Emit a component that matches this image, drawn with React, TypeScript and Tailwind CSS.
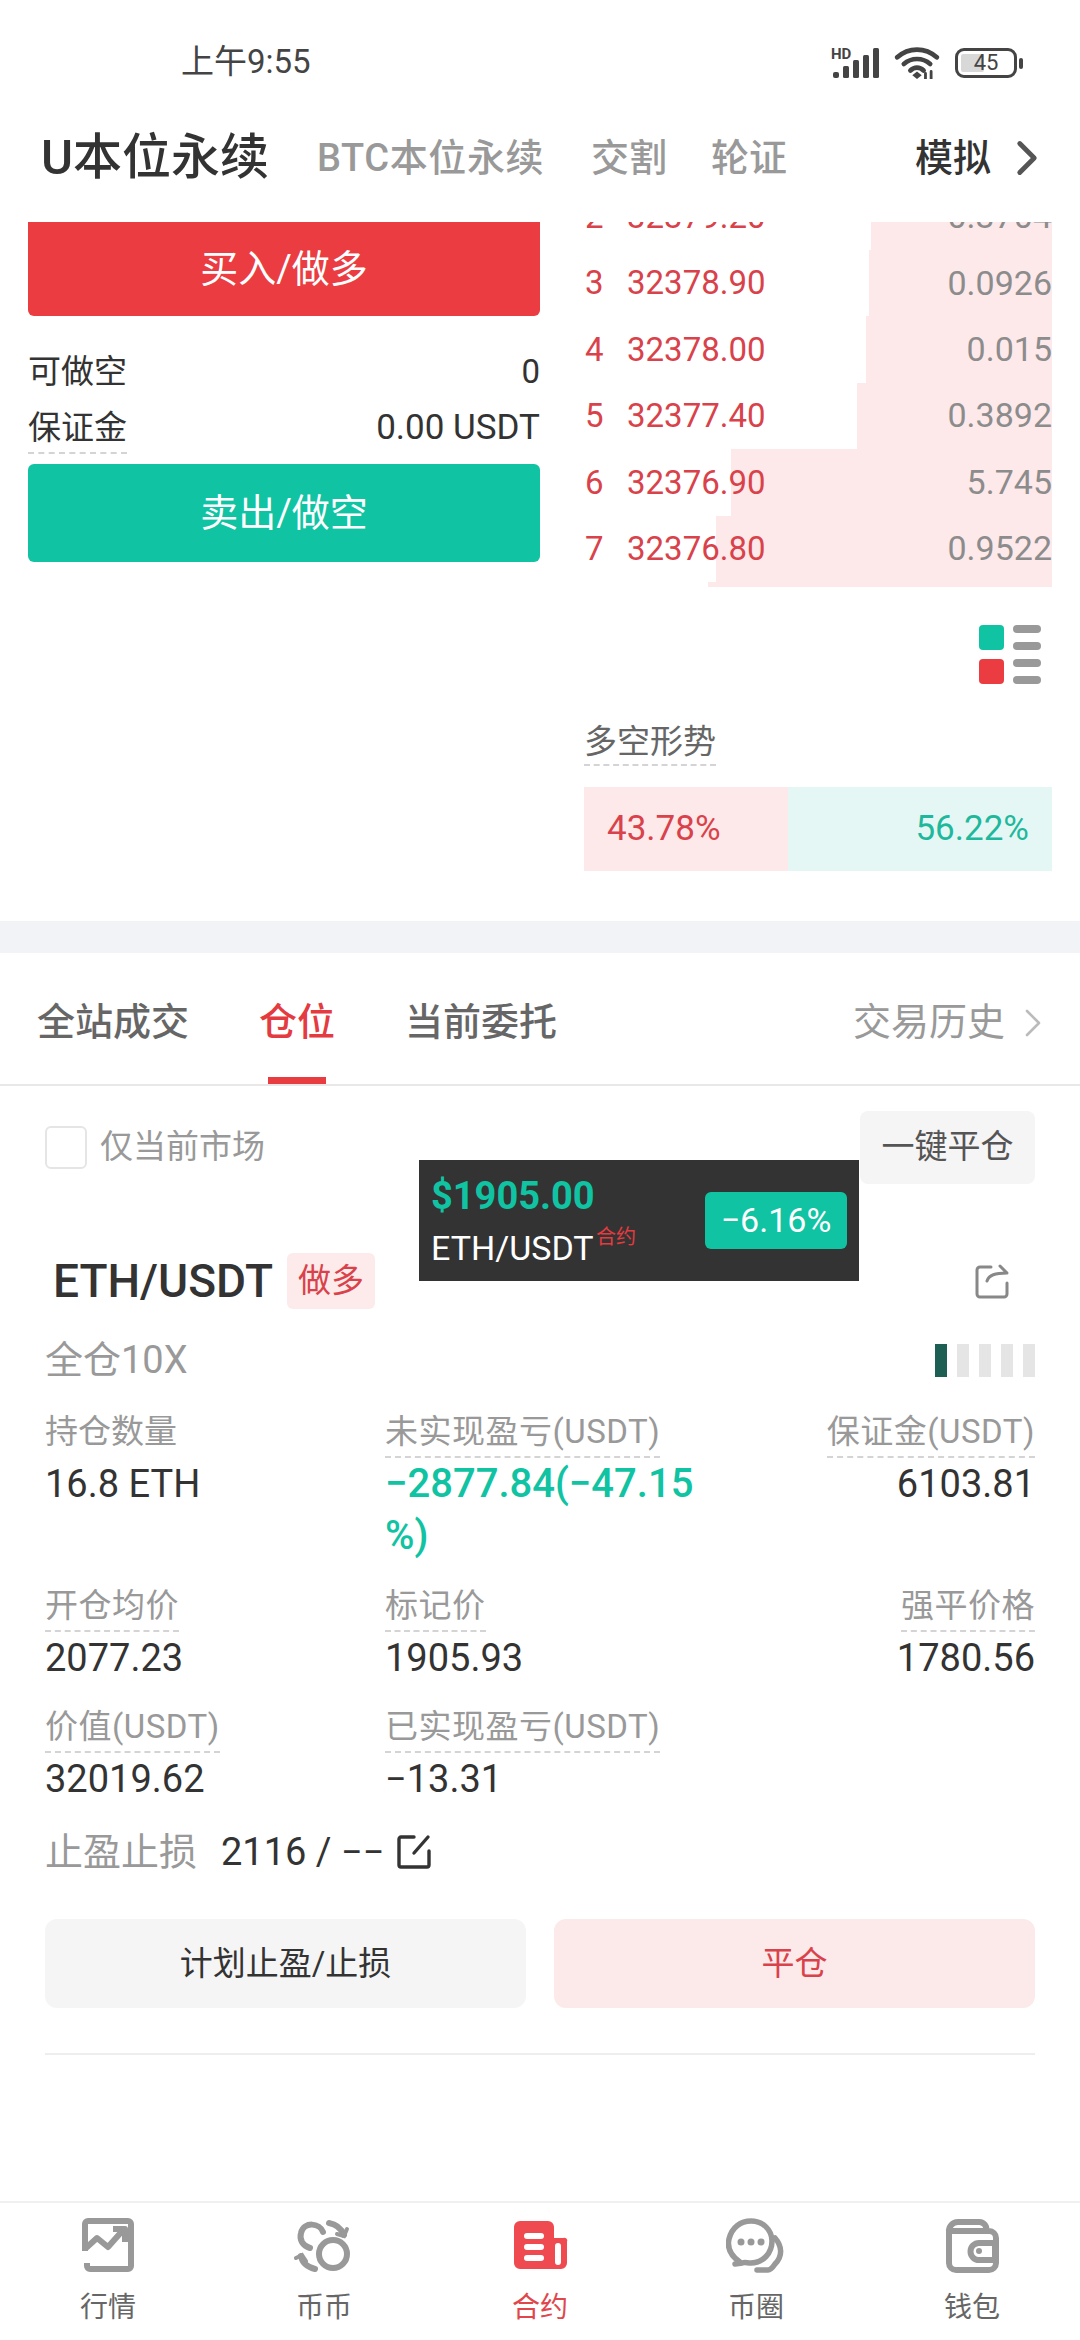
import { ChevronRight } from "lucide-react";

const bookRows = [
  { n: "2", price: "32379.20", qty: "0.3704", bar: 181 },
  { n: "3", price: "32378.90", qty: "0.0926", bar: 183 },
  { n: "4", price: "32378.00", qty: "0.015", bar: 186 },
  { n: "5", price: "32377.40", qty: "0.3892", bar: 195 },
  { n: "6", price: "32376.90", qty: "5.745", bar: 321 },
  { n: "7", price: "32376.80", qty: "0.9522", bar: 336 },
];

function StatusIcons() {
  return (
    <div className="flex items-center gap-[15px] mt-[7px]">
      <div className="relative w-[48px] h-[30px]">
        <span className="absolute left-0 -top-[2px] text-[15px] leading-[16px] font-bold text-[#444]">HD</span>
        <svg width="48" height="30" viewBox="0 0 48 30" fill="#444">
          <rect x="2" y="24" width="6" height="6" rx="2" />
          <rect x="12" y="18" width="6" height="12" rx="1.5" />
          <rect x="22" y="12" width="6" height="18" rx="1.5" />
          <rect x="32" y="7" width="6" height="23" rx="1.5" />
          <rect x="42" y="0" width="6" height="30" rx="1.5" />
        </svg>
      </div>
      <svg width="46" height="32" viewBox="0 0 48 34" fill="none" stroke="#444" strokeWidth="5" strokeLinecap="round">
        <path d="M3 11C15 0 33 0 45 11" />
        <path d="M10 18C18 11 30 11 38 18" />
        <path d="M17 25C21 21 27 21 31 25" />
        <path d="M24 26l5 4-5 4-5-4z" fill="#444" stroke="none" />
        <path d="M33 28v6M39 26v8" strokeWidth="3" />
      </svg>
      <div className="flex items-center gap-[2px]">
        <div className="relative w-[62px] h-[30px] rounded-[9px] border-[3px] border-[#444] p-[3px]">
          <div className="w-[45%] h-full bg-[#d8d8d8] rounded-[2px]" />
          <span className="absolute inset-0 flex items-center justify-center text-[22px] leading-none text-[#444]">45</span>
        </div>
        <div className="w-[4px] h-[11px] bg-[#444] rounded-full" />
      </div>
    </div>
  );
}

function Label({ children }: { children: React.ReactNode }) {
  return (
    <span className="inline-block text-[33px] tracking-[0.5px] leading-[40px] pb-[4px] text-[#999] border-b-2 border-dashed border-[#d4d4d4]">
      {children}
    </span>
  );
}

function Stat({ label, value, right, plain }: { label: string; value: string; right?: boolean; plain?: boolean }) {
  return (
    <div className={right ? "text-right" : ""}>
      {plain ? <span className="inline-block text-[33px] leading-[40px] pb-[6px] text-[#999]">{label}</span> : <Label>{label}</Label>}
      <div className="text-[38px] leading-[52px] text-[#333]">{value}</div>
    </div>
  );
}

function NavIcon({ name }: { name: string }) {
  if (name === "行情") {
    return (
      <svg width="60" height="60" viewBox="0 0 60 60" fill="none" stroke="#999" strokeWidth="6" strokeLinejoin="round">
        <path d="M7 36V9a3 3 0 0 1 3-3h40a3 3 0 0 1 3 3v42a3 3 0 0 1-3 3H12a3 3 0 0 1-3-3v-3" />
        <path d="M8 33l11-10 11 9 16-18" />
        <path d="M35 14h12v13" />
      </svg>
    );
  }
  if (name === "币币") {
    return (
      <svg width="60" height="60" viewBox="0 0 60 60" fill="none" stroke="#999" strokeWidth="6" strokeLinecap="round">
        <circle cx="39" cy="39" r="14" />
        <path d="M29 17C26 8 10 6 7 18c-2 7 2 13 9 15" />
        <path d="M35 8c6 1 12 5 15 12" />
        <path d="M53 14l-3 7-7-2" strokeWidth="4" />
        <path d="M7 41c1 6 6 11 14 13" />
        <path d="M2 43l6-3 4 6" strokeWidth="4" />
      </svg>
    );
  }
  if (name === "合约") {
    return (
      <svg width="60" height="60" viewBox="0 0 60 60">
        <path d="M10 6h28a6 6 0 0 1 6 6v11h9a3 3 0 0 1 4 4v21a6 6 0 0 1-6 6H10a6 6 0 0 1-6-6V12a6 6 0 0 1 6-6z" fill="#ef4a4f" />
        <rect x="14" y="18" width="20" height="6" rx="3" fill="#fff" />
        <rect x="14" y="29" width="20" height="6" rx="3" fill="#fff" />
        <rect x="14" y="40" width="20" height="6" rx="3" fill="#fff" />
        <rect x="45" y="28" width="6" height="22" rx="3" fill="#fff" />
      </svg>
    );
  }
  if (name === "币圈") {
    return (
      <svg width="60" height="60" viewBox="0 0 60 60" fill="none" stroke="#999" strokeWidth="5.5" strokeLinecap="round">
        <path d="M14 47C5 41 1 33 3 24 6 12 15 6 25 6c12 0 21 9 21 20 0 12-9 22-21 22-4 0-6-1-9 0l-7 1" />
        <path d="M49 23c7 8 8 18 0 26-2 3-5 6-7 6l-11 0" />
        <circle cx="15" cy="27" r="3.5" fill="#999" stroke="none" />
        <circle cx="25" cy="27" r="3.5" fill="#999" stroke="none" />
        <circle cx="35" cy="27" r="3.5" fill="#999" stroke="none" />
      </svg>
    );
  }
  return (
    <svg width="60" height="60" viewBox="0 0 60 60" fill="none" stroke="#999" strokeWidth="6" strokeLinejoin="round">
      <path d="M7 17a9 9 0 0 1 9-10h21a7 7 0 0 1 7 9h3a7 7 0 0 1 7 7v25a7 7 0 0 1-7 7H14a7 7 0 0 1-7-7z" />
      <path d="M8 16h36" />
      <path d="M53 28H37a8 8 0 0 0 0 17h16z" />
      <circle cx="37" cy="36" r="3" fill="#999" stroke="none" />
    </svg>
  );
}

export default function App() {
  return (
    <div className="relative w-[1080px] h-[2340px] overflow-hidden bg-white flex flex-col font-['Roboto','Noto_Sans_CJK_SC',sans-serif] text-[#333]">
      {/* Status bar */}
      <div className="h-[94px] pt-[40px] pl-[181px] pr-[57px] flex items-start justify-between">
        <span className="text-[33px] leading-[44px] text-[#444]">上午9:55</span>
        <StatusIcons />
      </div>

      {/* Header tabs */}
      <div className="h-[128px] pl-[41px] pr-[24px] flex items-center">
        <span className="text-[49px] font-medium text-[#333] w-[276px]">U本位永续</span>
        <span className="text-[38px] tracking-[0.6px] font-medium text-[#999] w-[274px]">BTC本位永续</span>
        <span className="text-[38px] font-medium text-[#999] w-[120px]">交割</span>
        <span className="text-[38px] font-medium text-[#999]">轮证</span>
        <span className="ml-auto text-[38px] font-medium text-[#333]">模拟</span>
        <ChevronRight className="ml-[7px] w-[58px] h-[58px] text-[#555]" strokeWidth={2} />
      </div>

      {/* Trade panel */}
      <div className="h-[699px] flex">
        <div className="w-[584px] pl-[28px] pr-[44px]">
          <div className="h-[94px] bg-[#ea3c41] rounded-b-[6px] flex items-center justify-center text-[38px] text-white">
            买入/做多
          </div>
          <div className="mt-[28px] flex justify-between text-[33px] leading-[56px] text-[#333]">
            <span>可做空</span>
            <span>0</span>
          </div>
          <div className="flex justify-between text-[33px] leading-[56px] text-[#333]">
            <span className="h-[54px] border-b-2 border-dashed border-[#d4d4d4]">保证金</span>
            <span className="text-[35px]">0.00 USDT</span>
          </div>
          <div className="mt-[8px] h-[98px] bg-[#10c3a2] rounded-[6px] flex items-center justify-center text-[38px] text-white">
            卖出/做空
          </div>
        </div>

        <div className="flex-1 pr-[28px]">
          <div className="h-[365px] overflow-hidden">
            <div className="-mt-[38.4px]">
              {bookRows.map((row) => (
                <div key={row.n} className="relative h-[66.4px] flex items-center text-[33px]">
                  <div className="absolute right-0 inset-y-0 bg-[#fde9ea]" style={{ width: row.bar }} />
                  <span className="relative w-[43px] pl-[1px] text-[#d9424a]">{row.n}</span>
                  <span className="relative text-[#d9424a]">{row.price}</span>
                  <span className="relative ml-auto text-[34px] text-[#8c8c8c]">{row.qty}</span>
                </div>
              ))}
              <div className="ml-auto w-[344px] h-[6px] bg-[#fde9ea]" />
            </div>
          </div>

          <div className="mt-[38px] flex justify-end pr-[11px]">
            <div className="grid grid-cols-[25px_28px] gap-x-[9px] gap-y-[9px]">
              <div className="h-[25px] rounded-[4px] bg-[#10c3a2]" />
              <div className="flex flex-col justify-between">
                <div className="h-[8px] rounded-full bg-[#999]" />
                <div className="h-[8px] rounded-full bg-[#999]" />
              </div>
              <div className="h-[25px] rounded-[4px] bg-[#ea3c41]" />
              <div className="flex flex-col justify-between">
                <div className="h-[8px] rounded-full bg-[#999]" />
                <div className="h-[8px] rounded-full bg-[#999]" />
              </div>
            </div>
          </div>

          <div className="mt-[36px]">
            <span className="inline-block text-[33px] leading-[44px] text-[#666] border-b-2 border-dashed border-[#d4d4d4]">多空形势</span>
          </div>
          <div className="mt-[21px] h-[84px] flex text-[35px]">
            <div className="w-[204px] bg-[#fde9ea] pl-[23px] flex items-center text-[#d9424a]">43.78%</div>
            <div className="flex-1 bg-[#e5f7f5] pr-[23px] flex items-center justify-end text-[#1fb89c]">56.22%</div>
          </div>
        </div>
      </div>

      <div className="h-[32px] bg-[#f1f3f6]" />

      {/* Position tabs */}
      <div className="h-[133px] pt-[8px] border-b-2 border-[#e8e8e8] pl-[37px] pr-[23px] flex items-center text-[38px] font-medium text-[#666]">
        <span>全站成交</span>
        <span className="relative ml-[70px] text-[#e43b41]">
          仓位
          <span className="absolute left-[9px] right-[9px] -bottom-[33px] h-[7px] bg-[#e93c40]" />
        </span>
        <span className="ml-[70px]">当前委托</span>
        <span className="ml-auto font-normal text-[#999]">交易历史</span>
        <ChevronRight className="ml-[4px] w-[48px] h-[48px] text-[#bbb]" strokeWidth={1.3} />
      </div>

      {/* Position card */}
      <div className="flex-1 px-[45px]">
        <div className="mt-[24px] h-[74px] flex items-center justify-between">
          <label className="flex items-center gap-[13px] text-[33px] text-[#999]">
            <span className="w-[42px] h-[43px] rounded-[6px] border-2 border-[#e5e5e5]" />
            仅当前市场
          </label>
          <div className="w-[175px] h-[73px] rounded-[8px] bg-[#f5f5f5] flex items-center justify-center text-[33px] text-[#555]">
            一键平仓
          </div>
        </div>

        <div className="mt-[69px] flex items-center justify-between">
          <div className="flex items-center pl-[8px]">
            <span className="text-[46px] leading-[56px] font-medium text-[#333]">ETH/USDT</span>
            <span className="ml-[14px] w-[88px] h-[56px] rounded-[6px] bg-[#fdeaea] flex items-center justify-center text-[33px] text-[#d9424a]">做多</span>
          </div>
          <svg className="mr-[25px]" width="36" height="36" viewBox="0 0 36 36" fill="none" stroke="#888" strokeWidth="3" strokeLinecap="round" strokeLinejoin="round">
            <path d="M17 4H6a3 3 0 0 0-3 3v24a3 3 0 0 0 3 3h24a3 3 0 0 0 3-3V20" />
            <path d="M13 18c2-6 8-8 20-8L26 3" />
          </svg>
        </div>

        <div className="mt-[23px] h-[56px] flex items-center justify-between">
          <span className="text-[38px] text-[#999]">全仓10X</span>
          <div className="flex gap-[10px]">
            <div className="w-[12px] h-[33px] bg-[#1d5f52]" />
            <div className="w-[12px] h-[33px] bg-[#e5e5e5]" />
            <div className="w-[12px] h-[33px] bg-[#e5e5e5]" />
            <div className="w-[12px] h-[33px] bg-[#e5e5e5]" />
            <div className="w-[12px] h-[33px] bg-[#e5e5e5]" />
          </div>
        </div>

        <div className="mt-[24px] grid grid-cols-[340px_325px_1fr]">
          <div className="h-[174px]">
            <Stat label="持仓数量" value="16.8 ETH" plain />
          </div>
          <div>
            <Label>未实现盈亏(USDT)</Label>
            <div className="text-[40px] leading-[52px] font-medium text-[#10c3a2]">
              −2877.84(−47.15
              <br />
              %)
            </div>
          </div>
          <Stat label="保证金(USDT)" value="6103.81" right />

          <div className="h-[121px]">
            <Stat label="开仓均价" value="2077.23" />
          </div>
          <Stat label="标记价" value="1905.93" />
          <Stat label="强平价格" value="1780.56" right />

          <Stat label="价值(USDT)" value="32019.62" />
          <Stat label="已实现盈亏(USDT)" value="−13.31" />
        </div>

        <div className="mt-[21px] flex items-center text-[38px] leading-[52px]">
          <span className="text-[#999]">止盈止损</span>
          <span className="ml-[24px] text-[#333]">2116 / −−</span>
          <svg className="ml-[12px]" width="36" height="36" viewBox="0 0 36 36" fill="none" stroke="#333" strokeWidth="3.4" strokeLinecap="round" strokeLinejoin="round">
            <path d="M18 3H5a2 2 0 0 0-2 2v26a2 2 0 0 0 2 2h26a2 2 0 0 0 2-2V17" />
            <path d="M18 19L32 3" />
          </svg>
        </div>

        <div className="mt-[41px] grid grid-cols-2 gap-[28px] text-[33px]">
          <div className="h-[89px] rounded-[12px] bg-[#f5f5f5] flex items-center justify-center text-[#333]">计划止盈/止损</div>
          <div className="h-[89px] rounded-[12px] bg-[#fce9ea] flex items-center justify-center text-[#d9424a]">平仓</div>
        </div>

        <div className="mt-[45px] h-[2px] bg-[#eeeeee]" />
      </div>

      {/* Bottom nav */}
      <div className="h-[139px] border-t-2 border-[#f0f0f0] grid grid-cols-5 pt-[12px]">
        {["行情", "币币", "合约", "币圈", "钱包"].map((name) => (
          <div key={name} className="flex flex-col items-center">
            <NavIcon name={name} />
            <span className={name === "合约" ? "mt-[15px] text-[28px] leading-[36px] text-[#e0474c]" : "mt-[15px] text-[28px] leading-[36px] text-[#666]"}>
              {name}
            </span>
          </div>
        ))}
      </div>

      {/* Floating price ticker */}
      <div className="absolute left-[419px] top-[1160px] w-[440px] h-[121px] bg-[#333] flex items-center justify-between px-[12px]">
        <div>
          <div className="text-[38px] leading-[48px] font-bold text-[#10c3a2]">$1905.00</div>
          <div className="mt-[6px] relative text-[34px] leading-[44px] text-white">
            ETH/USDT
            <span className="absolute left-[165px] -top-[2px] whitespace-nowrap text-[20px] leading-[26px] text-[#e43b41]">合约</span>
          </div>
        </div>
        <div className="w-[142px] h-[57px] rounded-[6px] bg-[#10c3a2] flex items-center justify-center text-[34px] text-white">−6.16%</div>
      </div>
    </div>
  );
}
